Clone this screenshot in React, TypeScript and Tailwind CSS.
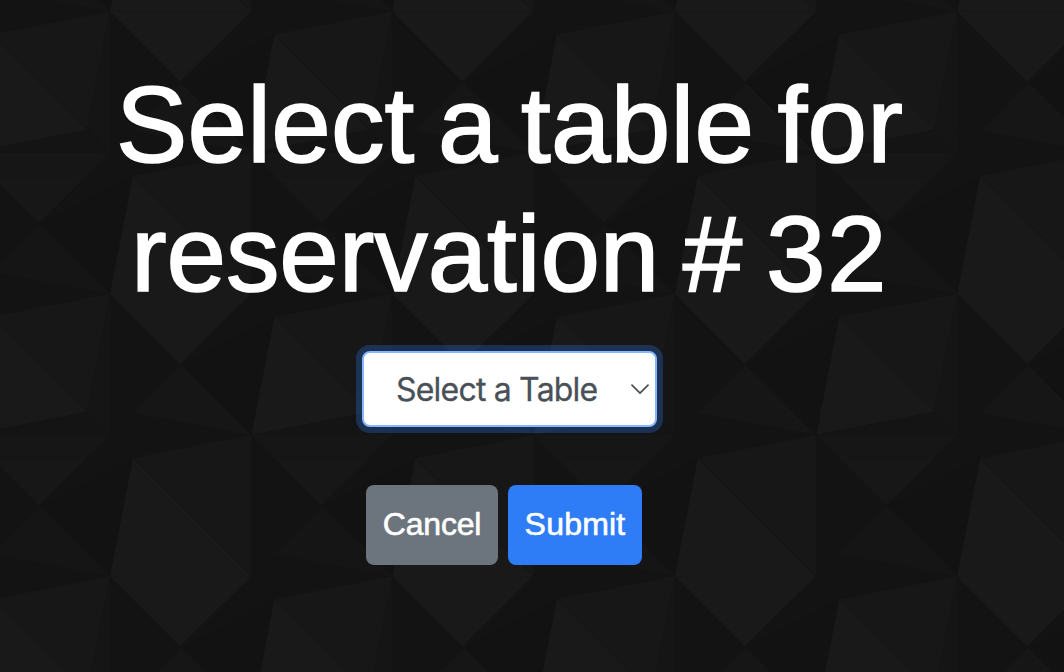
const TILE = 282.4;

type Facet = { points: string; fill: string };

const brightStar: Facet[] = [
  { points: "0,0 -118,23 -23,118", fill: "#171717" },
  { points: "0,0 23,-118 141,0", fill: "#191919" },
  { points: "0,0 141,0 70,70", fill: "#191919" },
  { points: "0,0 -70,-70 -118,-22", fill: "#151515" },
];

const dimStar: Facet[] = [
  { points: "0,0 -118,23 0,141", fill: "#171717" },
  { points: "0,0 23,-118 118,-23", fill: "#191919" },
  { points: "118,-23 141,-141 141,0", fill: "#151515" },
  { points: "0,0 118,-23 141,0", fill: "#141414" },
  { points: "0,0 141,0 70,70", fill: "#161616" },
  { points: "25,25 116,25 70,70", fill: "#171717" },
  { points: "0,0 -70,-70 -118,-22", fill: "#161616" },
];

function Star({ x, y, facets }: { x: number; y: number; facets: Facet[] }) {
  return (
    <g transform={`translate(${x} ${y})`}>
      <polygon points="0,0 -70,-70 23,-118" fill="#121212" />
      {facets.map((f, i) => (
        <polygon key={i} points={f.points} fill={f.fill} />
      ))}
    </g>
  );
}

function Backdrop() {
  const cells = [-1, 0, 1, 2, 3, 4].flatMap((i) => [-1, 0, 1, 2, 3].map((j) => [i, j]));
  return (
    <svg className="absolute inset-0 h-full w-full" viewBox="0 0 1064 672" preserveAspectRatio="xMinYMin slice" aria-hidden="true">
      <rect width="1064" height="672" fill="#131313" />
      {cells.map(([i, j]) => (
        <g key={`${i}:${j}`}>
          <Star x={110 + i * TILE} y={11.5 + j * TILE} facets={brightStar} />
          <Star x={-31 + i * TILE} y={152.7 + j * TILE} facets={dimStar} />
        </g>
      ))}
    </svg>
  );
}

export default function App() {
  return (
    <main className="relative h-screen w-full overflow-hidden bg-[#141414] font-['Liberation_Sans',Arial,sans-serif]">
      <Backdrop />
      <div className="relative flex w-[1019px] flex-col items-center pt-[61px]">
        <h1 className="text-center text-[107px] leading-[129px] font-normal text-white [-webkit-text-stroke:1.7px_white]">
          <span className="block whitespace-nowrap tracking-[0.2px] [word-spacing:-6.5px]">Select a table for</span>
          <span className="block whitespace-nowrap tracking-[-0.1px] [word-spacing:-6px]">
            reservation # <span className="tracking-[1.5px]">32</span>
          </span>
        </h1>
        <button className="mt-8 flex h-[76px] w-[295px] items-center justify-between rounded-lg border-2 border-[#86b7fe] bg-white pr-[6px] pl-8 font-[Inter,sans-serif] text-[32px] text-[#495057] shadow-[0_0_0_6px_rgba(46,125,246,0.28)]">
          <span className="pt-px whitespace-nowrap tracking-[-0.8px] [-webkit-text-stroke:0.3px_#495057]">Select a Table</span>
          <svg className="h-[11px] w-[18px] shrink-0" viewBox="0 0 18 11" fill="none" stroke="#495057" strokeWidth="1.7" strokeLinecap="round" strokeLinejoin="round">
            <path d="M1 1.2 9 9.2l8-8" />
          </svg>
        </button>
        <div className="mt-[58px] mr-[11px] flex gap-[10px] text-[32px] text-white [-webkit-text-stroke:0.6px_white]">
          <button className="flex h-20 w-[132px] items-center justify-center rounded-lg bg-[#6c757d] pb-[2px] tracking-[-0.2px]">Cancel</button>
          <button className="flex h-20 w-[134px] items-center justify-center rounded-lg bg-[#2e7df6] pb-[2px] tracking-[0.2px]">Submit</button>
        </div>
      </div>
    </main>
  );
}
